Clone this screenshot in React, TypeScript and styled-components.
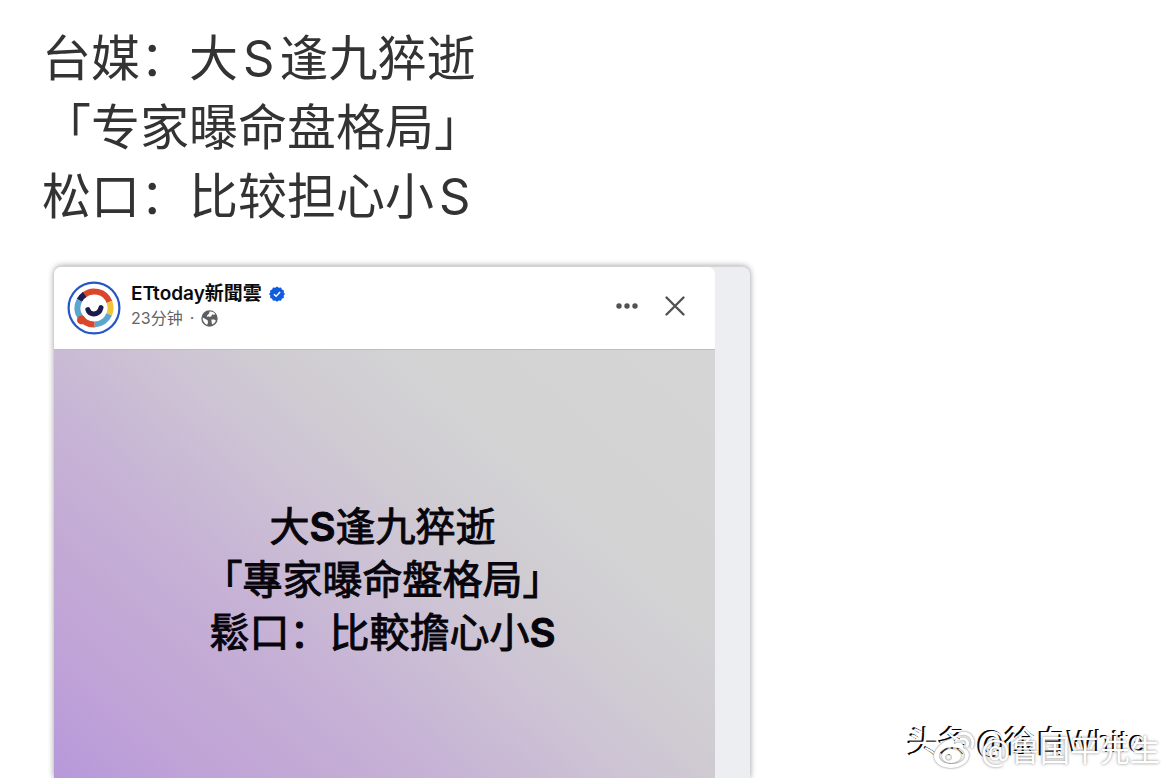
import React from "react";
import styled, { createGlobalStyle } from "styled-components";

const GlobalStyle = createGlobalStyle`
  * { box-sizing: border-box; }
  body {
    margin: 0;
    background: #fff;
    font-family: Inter, "Noto Sans CJK SC", sans-serif;
    overflow: hidden;
  }
`;

const Page = styled.main`
  position: relative;
  height: 100vh;
  padding: 24px 42px 0;
  display: flex;
  flex-direction: column;
  overflow: hidden;
`;

const Headline = styled.h1`
  margin: 0 0 35px;
  font-size: 49px;
  line-height: 69px;
  font-weight: 400;
  color: #333;
`;

const Line = styled.span`
  display: block;
  white-space: nowrap;
`;

const Latin = styled.span`
  margin: 0 5px;
`;

const Shot = styled.section`
  flex: 1;
  width: 100%;
  max-width: 696px;
  margin-left: 12px;
  padding-right: 35px;
  display: flex;
  background: #eceef2;
  border-top: 1px solid #d4d4d4;
  border-radius: 8px 8px 0 0;
  box-shadow: 0 0 6px rgba(0, 0, 0, 0.4);
`;

const Post = styled.article`
  flex: 1;
  display: flex;
  flex-direction: column;
`;

const PostHeader = styled.header`
  height: 82px;
  padding: 0 24px 0 13px;
  display: flex;
  align-items: center;
  gap: 10px;
  background: #fff;
  border-radius: 7px 7px 2px 0;
`;

const Author = styled.div`
  flex: 1;
  display: flex;
  flex-direction: column;
  padding-bottom: 4px;
`;

const NameRow = styled.div`
  display: flex;
  align-items: center;
  gap: 7px;
  height: 25px;
`;

const Name = styled.a`
  color: #0b0b0d;
  font-size: 19px;
  line-height: 25px;
  font-weight: 600;
  text-decoration: none;
`;

const Meta = styled.div`
  display: flex;
  align-items: center;
  gap: 7px;
  height: 25px;
  font-size: 16px;
  line-height: 25px;
  color: #626466;
`;

const IconButton = styled.button`
  width: 32px;
  height: 32px;
  padding: 0;
  border: 0;
  background: none;
  display: grid;
  place-items: center;
`;

const Actions = styled.div`
  display: flex;
  gap: 16px;
  padding-bottom: 4px;
`;

const PostBody = styled.div`
  flex: 1;
  padding-top: 150px;
  border-top: 1px solid #bdbdbd;
  text-align: center;
  background: linear-gradient(
    42deg,
    #b798da 0%,
    #bfa2d7 12%,
    #c3abd5 25%,
    #c8b6d5 38%,
    #cdc3d4 50%,
    #d0cdd2 62%,
    #d3d3d4 74%,
    #d5d5d5 100%
  );
`;

const PostText = styled.p`
  margin: 0;
  padding-right: 4px;
  font-size: 40px;
  line-height: 53px;
  font-weight: 400;
  color: #08060c;
  -webkit-text-stroke: 1px #08060c;
`;

const LatinStrong = styled.span`
  font-weight: 600;
`;

const SourceMark = styled.div`
  position: absolute;
  right: 24px;
  bottom: 17px;
  font-family: Roboto, "Noto Sans CJK SC", sans-serif;
  font-size: 31px;
  line-height: 36px;
  color: #fff;
  text-shadow: -1px -1px 0 #000, -2px -1px 0 #111;
  white-space: nowrap;
`;

const WeiboMark = styled.div`
  position: absolute;
  right: 10px;
  bottom: 8px;
  display: flex;
  align-items: center;
  gap: 4px;
  font-size: 30px;
  line-height: 36px;
  color: #fff;
  text-shadow: 0 0 3px rgba(0, 0, 0, 0.5);
  white-space: nowrap;
`;

const Avatar = () => (
  <svg width="54" height="54" viewBox="0 0 54 54" role="img" aria-label="ETtoday">
    <circle cx="27" cy="27" r="25.4" fill="#fff" stroke="#2456c4" strokeWidth="2.2" />
    <g fill="none" strokeWidth="6">
      <path d="M16.4 14.4A16.5 16.5 0 0 1 42.4 20.8" stroke="#d9472b" />
      <path d="M42.4 20.8A16.5 16.5 0 0 1 42.2 33.4" stroke="#f0c33c" />
      <path d="M42.2 33.4A16.5 16.5 0 0 1 27.5 43.5" stroke="#5aa6cc" />
      <path d="M27.5 43.5A16.5 16.5 0 0 1 13 35.7" stroke="#d9472b" />
      <path d="M13 35.7A16.5 16.5 0 0 1 12.4 19.3" stroke="#5aa6cc" />
      <path d="M12.4 19.3A16.5 16.5 0 0 1 17.6 13.6" stroke="#1d1b55" />
    </g>
    <circle cx="14.4" cy="39" r="4.4" fill="#d9472b" />
    <path d="M20.8 28.6C22 34.4 32 35 34 26.6" fill="none" stroke="#1d1b4c" strokeWidth="5" strokeLinecap="round" />
  </svg>
);

const Verified = () => (
  <svg width="16" height="16" viewBox="0 0 16 16" role="img" aria-label="Verified">
    <path
      d="M8 .4l1.8 1.3 2.2-.2.9 2 2 .9-.2 2.2L16 8l-1.300 1.600.2 2.200-2 .9-.9 2-2.200-.2L8 15.700l-1.800-1.200-2.200.2-.9-2-2-.9.2-2.200L0 8l1.300-1.400-.2-2.200 2-.9.9-2 2.200.2z"
      fill="#0f5be0"
    />
    <path d="M4.900 8.200l2.200 2.100 4-4.300" fill="none" stroke="#fff" strokeWidth="1.500" />
  </svg>
);

const Globe = () => (
  <svg width="17" height="17" viewBox="0 0 17 17" role="img" aria-label="Public">
    <circle cx="8.500" cy="8.500" r="7.500" fill="#5d5f61" stroke="#5d5f61" strokeWidth="1.400" />
    <path d="M8.400 1.700C11 1.300 13.200 2.400 14.400 4.200L12.600 4.800 11 4.600 10.400 6.200 8.800 7 7.800 6.200 6.600 7 5.800 6 7 4.400 8.200 3.600z" fill="#fff" />
    <path d="M1.600 7.600L4 8.800 6.600 10.200 7 12.400 6.200 15C3.400 13.800 1.500 11 1.600 7.600z" fill="#fff" />
    <path d="M10.400 9.600l2.800-.2 1.600 1.200c-.6 2-2 3.400-3.600 3.800l-.6-2.400z" fill="#fff" />
  </svg>
);

const WeiboSvg = styled.svg`
  filter: drop-shadow(0 0 1px #777);
`;

const WeiboLogo = () => (
  <WeiboSvg width="44" height="40" viewBox="0 0 44 40" aria-hidden="true">
    <path
      fillRule="evenodd"
      d="M15 10C8 13 1 20 1 26c0 7 8 12 17 12 10 0 18-6 18-13 0-4-3-6-6-7 1-4-2-7-9-4 1-5-2-6-6-4zM19 17c8 0 13 4 13 9 0 4-6 8-13 8s-13-3-13-8 6-9 13-9z"
      fill="#fff"
    />
    <path fillRule="evenodd" d="M18 19c6 0 10 3 10 7s-5 7-10 7-9-3-9-7 4-7 9-7zM15.500 24a3.300 3.300 0 1 0 .1 0z" fill="#fff" />
    <path d="M27 4c9-3 15 5 12 13M28 9c5-1 8 3 6 7" fill="none" stroke="#fff" strokeWidth="2.800" strokeLinecap="round" />
  </WeiboSvg>
);

export default function App() {
  return (
    <>
      <GlobalStyle />
      <Page lang="zh-CN">
        <Headline>
          <Line>台媒：大<Latin>S</Latin>逢九猝逝</Line>
          <Line>「专家曝命盘格局」</Line>
          <Line>松口：比较担心小<Latin>S</Latin></Line>
        </Headline>
        <Shot>
          <Post>
            <PostHeader>
              <Avatar />
              <Author>
                <NameRow>
                  <Name href="#">ETtoday新聞雲</Name>
                  <Verified />
                </NameRow>
                <Meta>
                  <span>23分钟</span>
                  <span>·</span>
                  <Globe />
                </Meta>
              </Author>
              <Actions>
                <IconButton aria-label="More">
                  <svg width="24" height="8" viewBox="0 0 24 8" fill="#505254">
                    <circle cx="4" cy="4" r="2.700" />
                    <circle cx="12" cy="4" r="2.700" />
                    <circle cx="20" cy="4" r="2.700" />
                  </svg>
                </IconButton>
                <IconButton aria-label="Close">
                  <svg width="22" height="22" viewBox="0 0 22 22">
                    <path d="M2.500 2.500l17 17m0-17l-17 17" stroke="#505254" strokeWidth="2.400" strokeLinecap="round" />
                  </svg>
                </IconButton>
              </Actions>
            </PostHeader>
            <PostBody>
              <PostText>
                <Line>大<LatinStrong>S</LatinStrong>逢九猝逝</Line>
                <Line>「專家曝命盤格局」</Line>
                <Line>鬆口：比較擔心小<LatinStrong>S</LatinStrong></Line>
              </PostText>
            </PostBody>
          </Post>
        </Shot>
        <SourceMark>头条 @徐白White</SourceMark>
        <WeiboMark>
          <WeiboLogo />
          <span>@鲁国平先生</span>
        </WeiboMark>
      </Page>
    </>
  );
}
